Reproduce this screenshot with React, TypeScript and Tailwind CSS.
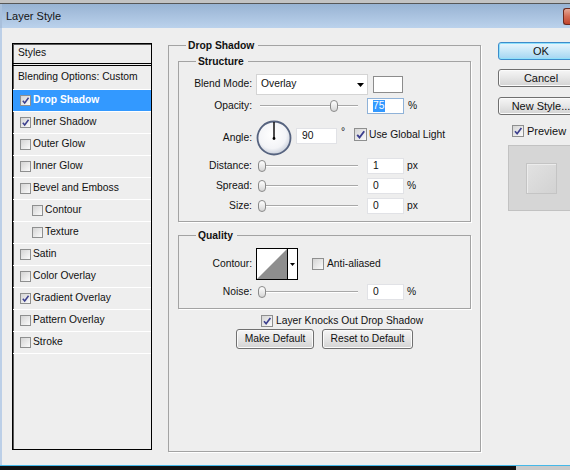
import React from 'react'

type Item = { label: string; checked?: boolean; selected?: boolean; indent?: boolean }

const ITEMS: Item[] = [
  { label: 'Drop Shadow', checked: true, selected: true },
  { label: 'Inner Shadow', checked: true },
  { label: 'Outer Glow' },
  { label: 'Inner Glow' },
  { label: 'Bevel and Emboss' },
  { label: 'Contour', indent: true },
  { label: 'Texture', indent: true },
  { label: 'Satin' },
  { label: 'Color Overlay' },
  { label: 'Gradient Overlay', checked: true },
  { label: 'Pattern Overlay' },
  { label: 'Stroke' },
]

function CheckBox({ checked = false, size = 'w-[11px] h-[11px]' }: { checked?: boolean; size?: string }) {
  return (
    <span
      className={`${size} shrink-0 flex items-center justify-center border border-[#8e8f8f] bg-linear-to-br from-[#d4d4d4] to-[#fbfbfb]`}
    >
      {checked && (
        <svg viewBox="0 0 10 10" className="w-full h-full">
          <path d="M2 5.3 L4.1 7.7 L8.4 2" fill="none" stroke="#3c3f8e" strokeWidth="1.7" />
        </svg>
      )}
    </span>
  )
}

function Slider({ thumb }: { thumb: string }) {
  return (
    <div className="relative ml-[6px] w-[102px] h-[16px] shrink-0">
      <div className="absolute left-[2px] right-[2px] top-[7px] h-[2px] border-t border-[#a8a8a8] bg-white" />
      <div
        className={`absolute ${thumb} top-[2px] w-[8px] h-[12px] rounded-[4px] border border-[#8a8a8a] bg-linear-to-b from-white to-[#d6d6d6]`}
      />
    </div>
  )
}

function NumField({ value, focused = false }: { value: string; focused?: boolean }) {
  return (
    <div
      className={`w-[37px] h-[16px] shrink-0 bg-white border flex items-center pl-[5px] ${
        focused ? 'border-[#8fb2d8]' : 'border-[#e1e2e6]'
      }`}
    >
      {focused ? <span className="bg-[#3399ff] text-white leading-[12px] pr-[1px]">{value}</span> : value}
    </div>
  )
}

function Group({ title, className, children }: { title: string; className: string; children?: React.ReactNode }) {
  return (
    <div className={`relative shrink-0 border border-[#a3a3a3] shadow-[1px_1px_0_#fff] ${className}`}>
      <span className="absolute left-[17px] -top-[7px] pl-[2px] pr-[4px] bg-[#eeeeee] font-bold leading-[13px]">
        {title}
      </span>
      {children}
    </div>
  )
}

function Label({ children }: { children: React.ReactNode }) {
  return <span className="w-[73px] shrink-0 text-right">{children}</span>
}

function SliderRow({ label, thumb, value, unit, className }: { label: string; thumb: string; value: string; unit: string; className: string }) {
  return (
    <div className={`flex items-center h-[16px] ${className}`}>
      <Label>{label}</Label>
      <Slider thumb={thumb} />
      <div className="ml-[7px]">
        <NumField value={value} />
      </div>
      <span className="ml-[3px]">{unit}</span>
    </div>
  )
}

function WinButton({ children, primary = false, width }: { children: React.ReactNode; primary?: boolean; width: string }) {
  return (
    <div
      className={`${width} shrink-0 flex items-center justify-center rounded-[3px] border ${
        primary
          ? 'border-[#3c8ccb] bg-linear-to-b from-[#eaf6fd] via-[#c6e7f8] to-[#a3d5f2] shadow-[inset_0_0_0_1px_#8ee0fb]'
          : 'border-[#707070] bg-linear-to-b from-[#f6f6f6] via-[#e6e6e6] to-[#d3d3d3] shadow-[inset_0_0_0_1px_#fbfbfb]'
      }`}
    >
      {children}
    </div>
  )
}

export default function App() {
  return (
    <div className="w-[570px] h-[470px] overflow-hidden bg-[#eeeeee] text-[#111] font-['Liberation_Sans',Arial,sans-serif] text-[10.3px] leading-none select-none">
      {/* title bar */}
      <div className="h-[3px] bg-[#c3c3c3]" />
      <div className="h-[1px] bg-[#575757]" />
      <div className="h-[24px] flex bg-linear-to-b from-[#98b3d3] to-[#bbd2ec] border-l-2 border-[#a9c0dc]">
        <span className="self-center pl-[4px] text-[11px] text-[#141414]">Layer Style</span>
        <div className="ml-auto mt-[4px] w-[7px] h-[17px] rounded-l-[3px] border border-r-0 border-[#6c2a1e] bg-linear-to-b from-[#e4a897] via-[#d26c55] to-[#c1432b]" />
      </div>

      {/* body */}
      <div className="h-[437px] flex items-start border-l-2 border-[#bccfe7]">
        {/* styles list */}
        <div className="ml-[10px] mt-[15px] w-[140px] h-[407px] shrink-0 border border-black shadow-[inset_1px_1px_0_#5a5a5a]">
          <div className="h-[22px] flex items-center pl-[5px] border-b-[3px] border-double border-black">Styles</div>
          <div className="h-[24px] flex items-center pl-[5px] border-b border-white">Blending Options: Custom</div>
          {ITEMS.map((it) => (
            <div
              key={it.label}
              className={`h-[22px] flex items-center border-b border-white ${it.indent ? 'pl-[19px]' : 'pl-[7px]'} ${
                it.selected ? 'bg-[#3399ff] text-white font-bold' : ''
              }`}
            >
              <CheckBox checked={it.checked} />
              <span className="ml-[2px]">{it.label}</span>
            </div>
          ))}
        </div>

        {/* drop shadow panel */}
        <Group title="Drop Shadow" className="ml-[16px] mt-[17px] w-[313px] h-[407px]">
          <div className="flex flex-col pl-[9px] pt-[15px]">
            <Group title="Structure" className="w-[293px] h-[161px]">
              <div className="flex flex-col pt-[12px]">
                <div className="flex items-center h-[21px]">
                  <Label>Blend Mode:</Label>
                  <div className="ml-[4px] w-[112px] h-[21px] shrink-0 bg-white border border-[#d4d4d4] flex items-center justify-between pl-[4px] pr-[3px]">
                    <span>Overlay</span>
                    <svg width="7" height="4" viewBox="0 0 7 4">
                      <polygon points="0,0 7,0 3.5,4" fill="#000" />
                    </svg>
                  </div>
                  <div className="ml-[5px] w-[30px] h-[17px] shrink-0 bg-white border border-[#8c8c8c]" />
                </div>

                <div className="flex items-center h-[16px] mt-[3px]">
                  <Label>Opacity:</Label>
                  <Slider thumb="left-[72px]" />
                  <div className="ml-[7px]">
                    <NumField value="75" focused />
                  </div>
                  <span className="ml-[4px]">%</span>
                </div>

                <div className="flex items-center h-[36px] mt-[6px]">
                  <Label>Angle:</Label>
                  <svg width="36" height="36" viewBox="0 0 36 36" className="ml-[4px] shrink-0">
                    <defs>
                      <radialGradient id="dial" cx="45%" cy="40%" r="60%">
                        <stop offset="0%" stopColor="#ffffff" />
                        <stop offset="70%" stopColor="#f3f4f7" />
                        <stop offset="100%" stopColor="#c9cfdb" />
                      </radialGradient>
                    </defs>
                    <circle cx="18" cy="18" r="16.5" fill="url(#dial)" stroke="#56637f" strokeWidth="1.8" />
                    <line x1="18" y1="18.5" x2="18" y2="2" stroke="#000" strokeWidth="1.4" />
                    <circle cx="18" cy="18.5" r="1.4" fill="#000" />
                  </svg>
                  <div className="self-start mt-[8px] ml-[4px] flex items-start">
                    <div className="w-[41px] h-[16px] bg-white border border-[#e1e2e6] flex items-center pl-[5px]">90</div>
                    <span className="w-[17px] pl-[4px] -mt-[1px]">°</span>
                    <CheckBox checked size="w-[13px] h-[13px]" />
                    <span className="ml-[2px] mt-[2px]">Use Global Light</span>
                  </div>
                </div>

                <SliderRow label="Distance:" thumb="left-0" value="1" unit="px" className="mt-[2px]" />
                <SliderRow label="Spread:" thumb="left-0" value="0" unit="%" className="mt-[4px]" />
                <SliderRow label="Size:" thumb="left-0" value="0" unit="px" className="mt-[4px]" />
              </div>
            </Group>

            <Group title="Quality" className="mt-[13px] w-[293px] h-[74px]">
              <div className="flex flex-col pt-[12px]">
                <div className="flex items-center h-[32px]">
                  <Label>Contour:</Label>
                  <div className="ml-[4px] w-[42px] h-[32px] shrink-0 border border-black bg-white flex">
                    <svg width="30" height="30" viewBox="0 0 30 30">
                      <polygon points="0,30 30,0 30,30" fill="#8e8e8e" />
                    </svg>
                    <div className="w-[10px] border-l border-black flex items-center justify-center">
                      <svg width="5" height="3" viewBox="0 0 5 3">
                        <polygon points="0,0 5,0 2.5,3" fill="#000" />
                      </svg>
                    </div>
                  </div>
                  <div className="ml-[14px]">
                    <CheckBox size="w-[12px] h-[12px]" />
                  </div>
                  <span className="ml-[3px]">Anti-aliased</span>
                </div>
                <SliderRow label="Noise:" thumb="left-0" value="0" unit="%" className="mt-[4px]" />
              </div>
            </Group>

            <div className="mt-[6px] ml-[83px] h-[12px] flex items-center">
              <CheckBox checked size="w-[12px] h-[12px]" />
              <span className="ml-[3px]">Layer Knocks Out Drop Shadow</span>
            </div>

            <div className="mt-[2px] ml-[58px] h-[20px] flex">
              <WinButton width="w-[78px]">Make Default</WinButton>
              <div className="ml-[8px] flex">
                <WinButton width="w-[91px]">Reset to Default</WinButton>
              </div>
            </div>
          </div>
        </Group>

        {/* buttons + preview */}
        <div className="ml-[17px] mt-[14px] w-[86px] shrink-0 flex flex-col text-[11px]">
          <div className="h-[18px] flex">
            <WinButton primary width="w-[86px]">OK</WinButton>
          </div>
          <div className="mt-[9px] h-[18px] flex">
            <WinButton width="w-[86px]">Cancel</WinButton>
          </div>
          <div className="mt-[10px] h-[18px] flex">
            <WinButton width="w-[86px]">New Style...</WinButton>
          </div>
          <div className="mt-[10px] ml-[14px] h-[12px] flex items-center">
            <CheckBox checked size="w-[12px] h-[12px]" />
            <span className="ml-[3px]">Preview</span>
          </div>
          <div className="mt-[8px] ml-[10px] w-[66px] h-[66px] shrink-0 border border-[#c2c2c2] bg-[#d6d6d6] flex items-center justify-center">
            <div className="w-[31px] h-[31px] border border-[#c4c4c4] bg-linear-to-br from-[#e2e2e2] to-[#d2d2d2] shadow-[inset_1px_1px_0_#ececec]" />
          </div>
        </div>
      </div>

      {/* taskbar edge */}
      <div className="h-[1px] bg-[#45b8e8]" />
      <div className="h-[4px] flex">
        <div className="w-[516px] bg-[#111111]" />
        <div className="flex-1 bg-[#cacaca]" />
      </div>
    </div>
  )
}
